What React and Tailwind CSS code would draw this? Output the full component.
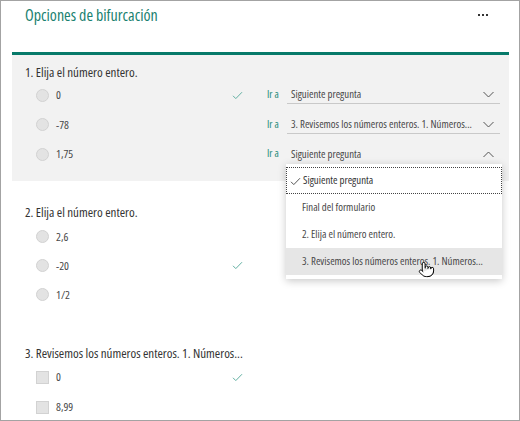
import { Pointer } from 'lucide-react'

const Check = ({ className = '' }) => (
  <svg width="11" height="9" viewBox="0 0 11 9" className={className} fill="none">
    <path d="M1 4.8L3.8 7.6L10 1.2" stroke="currentColor" strokeWidth="1" />
  </svg>
)

const Chevron = ({ up = false }) => (
  <svg width="11" height="7" viewBox="0 0 11 7" fill="none" className="text-[#555]">
    {up ? (
      <path d="M0.5 6L5.5 1L10.5 6" stroke="currentColor" strokeWidth="1" />
    ) : (
      <path d="M0.5 1L5.5 6L10.5 1" stroke="currentColor" strokeWidth="1" />
    )}
  </svg>
)

const Mark = ({ square }) =>
  square ? (
    <span className="w-[13px] h-[13px] bg-[#e3e3e3] border border-[#d2d2d2] shrink-0" />
  ) : (
    <span className="w-[13px] h-[13px] rounded-full bg-[#e3e3e3] border border-[#d2d2d2] shrink-0" />
  )

const Option = ({ label, correct, square, h, select, open }) => (
  <div className={`flex items-center ${h}`}>
    <div className="w-[220px] pl-[24px] flex items-center gap-[7px]">
      <Mark square={square} />
      <span className="text-[11.5px] text-[#484848]">{label}</span>
    </div>
    <div className="w-[11px]">{correct && <Check className="text-[#62b0a2]" />}</div>
    {select && (
      <div className="flex items-center ml-[24px]">
        <span className="text-[10.5px] text-[#1b8a78] w-[20px]">Ir a</span>
        <div className={`w-[213px] h-[18px] flex items-center justify-between pl-[4px] pr-[6px] ${open ? '' : 'border-b border-[#c9c9c9]'}`}>
          <span className="text-[10.8px] text-[#484848] whitespace-nowrap">{select}</span>
          <Chevron up={open} />
        </div>
      </div>
    )}
  </div>
)

const Question = ({ children, className = '' }) => (
  <div className={`pl-[13px] text-[13px] leading-[16px] text-[#333] whitespace-nowrap ${className}`}>{children}</div>
)

export default function App() {
  const items = [
    'Final del formulario',
    '2. Elija el número entero.',
    '3. Revisemos los números enteros. 1. Números...',
  ]

  return (
    <div
      className="relative w-[520px] h-[421px] bg-white border border-[#a3a3a3] overflow-hidden font-stretch-[87.5%]"
      style={{ fontFamily: '"Open Sans", Lato, sans-serif' }}
    >
      <div className="h-[51px] flex justify-between pl-[24px] pr-[31px] pt-[4px]">
        <span className="text-[16px] leading-[20px] text-[#1a8170]">Opciones de bifurcación</span>
        <span className="flex gap-[2px] pt-[9px]">
          <span className="w-[2px] h-[2px] bg-[#333]" />
          <span className="w-[2px] h-[2px] bg-[#333]" />
          <span className="w-[2px] h-[2px] bg-[#333]" />
        </span>
      </div>

      <div className="ml-[11px] w-[497px] h-[129px] border-t-[3px] border-[#077a6a] bg-[#f2f2f2] pt-[9px]">
        <Question>1. Elija el número entero.</Question>
        <Option label="0" correct h="h-[30px]" select="Siguiente pregunta" />
        <Option label="-78" h="h-[29px]" select="3. Revisemos los números enteros. 1. Números..." />
        <Option label="1,75" h="h-[30px]" select="Siguiente pregunta" open />
      </div>

      <div className="ml-[11px] w-[497px]">
        <Question className="mt-[23px]">2. Elija el número entero.</Question>
        <div className="pt-[2px]">
          <Option label="2,6" h="h-[29px]" />
          <Option label="-20" correct h="h-[29px]" />
          <Option label="1/2" h="h-[29px]" />
        </div>
        <Question className="mt-[36px]">3. Revisemos los números enteros. 1. Números...</Question>
        <div className="pt-[1px]">
          <Option label="0" square correct h="h-[30px]" />
          <Option label="8,99" square h="h-[30px]" />
        </div>
      </div>

      <div className="absolute left-[285px] top-[163px] w-[216px] bg-white pt-[3px] pb-[4px] shadow-[0_2px_8px_rgba(0,0,0,0.22)]">
        <div className="relative h-[27px] flex items-center pl-[16px] border border-dotted border-[#444]">
          <Check className="absolute left-[3px] top-[9px] text-[#555]" />
          <span className="text-[10.8px] text-[#333]">Siguiente pregunta</span>
        </div>
        {items.map((t, i) => (
          <div
            key={t}
            className={`h-[27px] flex items-center pl-[16px] text-[10.8px] text-[#484848] whitespace-nowrap ${i === 2 ? 'bg-[#e6e6e6]' : ''}`}
          >
            {t}
          </div>
        ))}
      </div>

      <Pointer
        size={17}
        strokeWidth={1.4}
        fill="white"
        className="absolute left-[417px] top-[260px] text-black"
      />
    </div>
  )
}
